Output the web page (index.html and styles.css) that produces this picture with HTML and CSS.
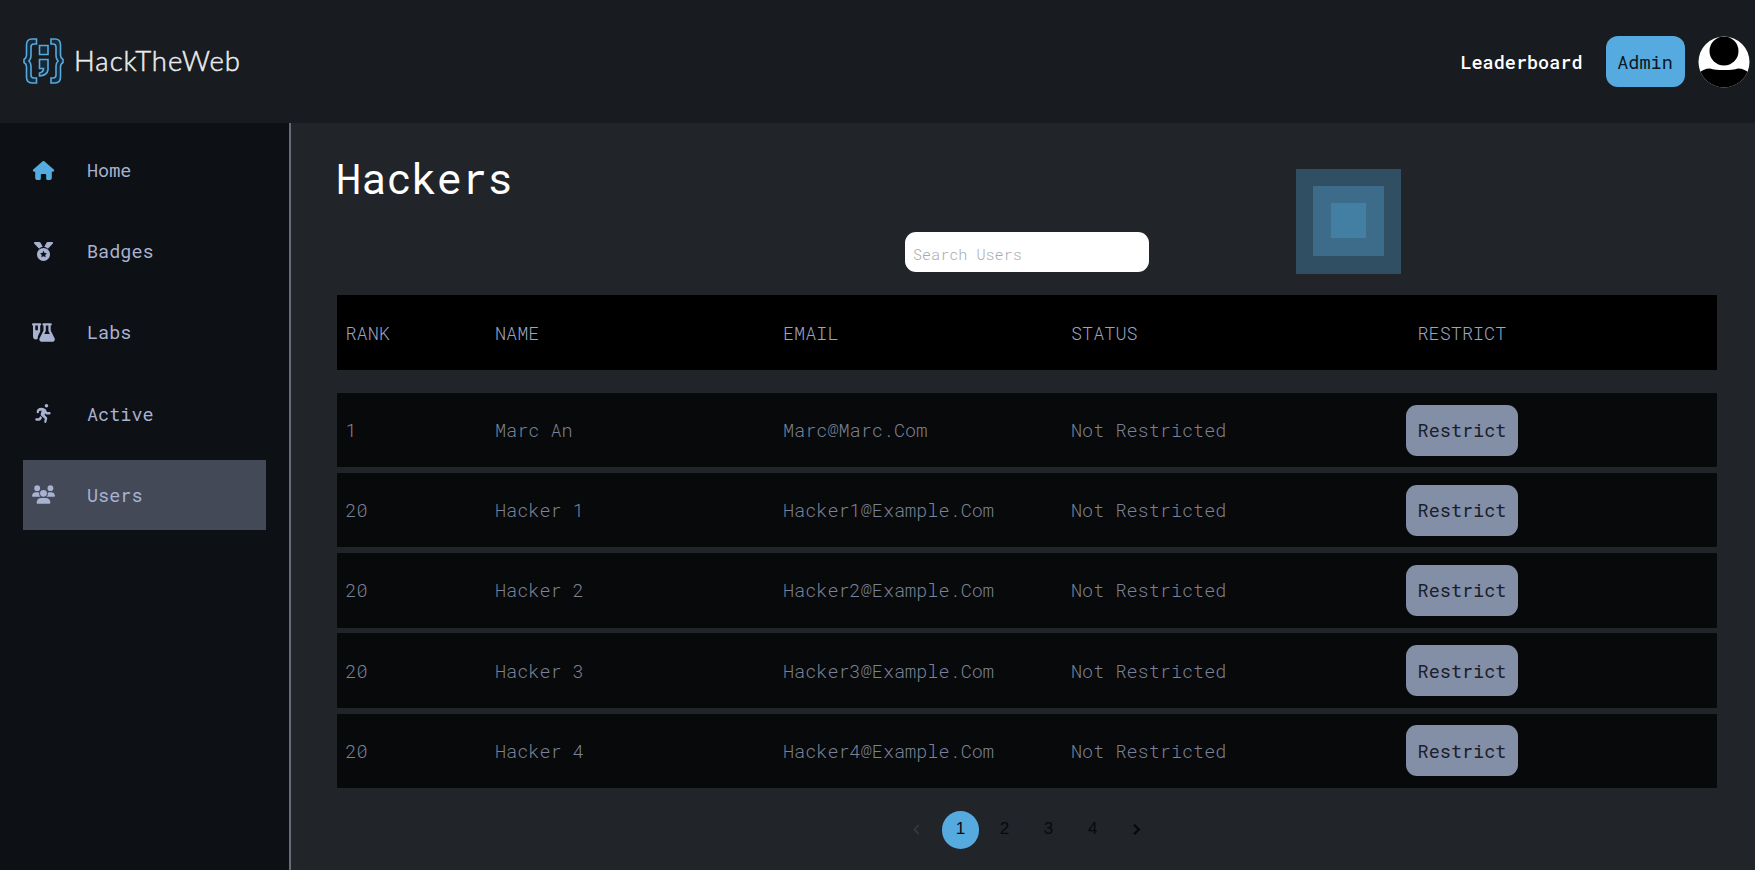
FILE: index.html
```html
<!DOCTYPE html>
<html lang="en">
<head>
<meta charset="utf-8">
<title>HackTheWeb</title>
<link rel="stylesheet" href="styles.css">
</head>
<body>
<header class="topbar">
  <div class="brand">
    <svg class="brand-mark" viewBox="0 0 41 46" width="41" height="46">
      <path d="M13.500 1H9Q3.500 1 3.500 7V17Q3.500 20 1 21.500V24.500Q3.500 26 3.500 29V39Q3.500 45 9 45H13.500V40H11Q8 40 8 37V28Q8 25 6 23Q8 21 8 18V9Q8 6 11 6H13.500Z"/>
      <path d="M28 1H32Q37.500 1 37.500 7V17Q37.500 20 40 21.500V24.500Q37.500 26 37.500 29V39Q37.500 45 32 45H28V40H30Q33 40 33 37V28Q33 25 35 23Q33 21 33 18V9Q33 6 30 6H28Z"/>
      <path d="M16.500 7.500H25V16.500H16.500ZM16.500 21.500H25V32Q24 37.500 16.500 38V35Q20.500 34 20.500 30.500H16.500Z"/>
    </svg>
    <svg class="brand-name" width="168" height="40" viewBox="0 0 168 40"><text x="0" y="30" textLength="166" lengthAdjust="spacing">HackTheWeb</text></svg>
  </div>
  <nav class="topnav">
    <a class="top-link">Leaderboard</a>
    <button class="admin">Admin</button>
    <svg class="avatar" viewBox="0 0 52 52" width="52" height="52">
      <clipPath id="round"><circle cx="26" cy="26" r="25.500"/></clipPath>
      <g clip-path="url(#round)"><rect width="52" height="52" fill="#fff"/><circle cx="26" cy="15" r="14.500"/><path d="M0 38Q5 32.500 12 32.500Q17 34 26 34Q35 34 40 32.500Q47 32.500 52 38V52H0Z"/></g>
    </svg>
  </nav>
</header>
<div class="body">
  <aside class="sidebar">
    <a class="item"><svg class="icon home" viewBox="0 0 576 512"><path d="M575.8 255.500c0 18-15 32.100-32 32.100h-32l.7 160.200c.2 35.500-28.500 64.300-64 64.300H392c-22 0-32-12-32-32V376c0-13-11-24-24-24h-96c-13 0-24 11-24 24v104c0 20-10 32-32 32h-56c-35.300 0-64-28.700-64-64V287.600H32c-18 0-32-14-32-32.100 0-9 3-17 10-24L266.400 8c7-7 15-8 22-8s15 2 21 7L564.800 231.500c8 7 12 15 11 24z"/></svg><span>Home</span></a>
    <a class="item"><svg class="icon" viewBox="0 0 512 512"><path fill-rule="evenodd" d="M4 38C-5 22 6 0 26 0h118c12 0 22 6 28 16l64 112c-38 6-73 24-99 51zM508 38 375 179c-27-27-61-45-99-51l64-112c6-10 16-16 28-16h118c20 0 31 22 22 38zM256 160a176 176 0 1 1 0 352 176 176 0 0 1 0-352zm0 76-29 58-64 9 46 45-11 64 58-30 58 30-11-64 46-45-64-9z"/></svg><span>Badges</span></a>
    <a class="item"><svg class="icon" viewBox="0 0 640 512"><path fill-rule="evenodd" d="M0 32Q0 0 24 0H232Q256 0 256 32Q256 60 228 64V230L174 340Q158 378 158 440Q40 480 28 368V64Q0 60 0 32ZM92 64V192H164V64ZM288 32Q288 0 320 0H520Q552 0 552 32Q552 60 520 64V200L632 425Q650 480 592 512H248Q190 480 208 425L320 200V64Q288 60 288 32ZM384 64V215L342 300H498L456 215V64Z"/></svg><span>Labs</span></a>
    <a class="item"><svg class="icon" viewBox="0 0 448 512"><circle cx="304" cy="48" r="48"/><path d="M40 220V196Q48 128 112 108Q190 92 248 120Q286 136 302 180L320 218H384Q416 222 416 250Q412 282 384 282H300Q278 276 268 250L254 298L310 350Q328 370 324 398L300 490Q290 514 266 511Q240 504 244 478L258 396L168 324Q142 300 150 266L174 184Q104 168 102 208V220Q94 250 68 248Q42 244 40 220ZM134 322L188 368Q158 440 106 448H32Q0 444 0 416Q2 386 32 384H94Q114 372 134 322Z"/></svg><span>Active</span></a>
    <a class="item active"><svg class="icon" viewBox="0 0 640 512"><circle cx="144" cy="80" r="80"/><circle cx="512" cy="80" r="80"/><circle cx="320" cy="224" r="96"/><path d="M0 299Q8 196 107 192H150Q178 192 201 203Q186 270 235 320H21Q2 318 0 299ZM640 299Q632 196 533 192H490Q462 192 439 203Q456 270 405 320H619Q638 318 640 299ZM128 485Q136 356 261 352H379Q504 356 512 485Q510 508 485 512H155Q130 508 128 485Z"/></svg><span>Users</span></a>
  </aside>
  <main class="content">
    <section class="intro">
      <h1>Hackers</h1>
      <input class="search" placeholder="Search Users">
      <div class="squares"><div class="sq-mid"><div class="sq-core"></div></div></div>
    </section>
    <div class="row head"><span>RANK</span><span>NAME</span><span>EMAIL</span><span>STATUS</span><span class="last">RESTRICT</span></div>
    <div class="rows">
      <div class="row"><span>1</span><span>Marc An</span><span>Marc@Marc.Com</span><span>Not Restricted</span><button class="restrict">Restrict</button></div>
      <div class="row"><span>20</span><span>Hacker 1</span><span>Hacker1@Example.Com</span><span>Not Restricted</span><button class="restrict">Restrict</button></div>
      <div class="row"><span>20</span><span>Hacker 2</span><span>Hacker2@Example.Com</span><span>Not Restricted</span><button class="restrict">Restrict</button></div>
      <div class="row"><span>20</span><span>Hacker 3</span><span>Hacker3@Example.Com</span><span>Not Restricted</span><button class="restrict">Restrict</button></div>
      <div class="row"><span>20</span><span>Hacker 4</span><span>Hacker4@Example.Com</span><span>Not Restricted</span><button class="restrict">Restrict</button></div>
    </div>
    <nav class="pages">
      <span class="page off"><svg viewBox="0 0 24 24" width="21" height="21"><path d="M15.410 7.410 14 6l-6 6 6 6 1.410-1.410L10.830 12z"/></svg></span>
      <span class="page current">1</span><span class="page">2</span><span class="page">3</span><span class="page">4</span>
      <span class="page next"><svg viewBox="0 0 24 24" width="21" height="21"><path d="M10 6 8.590 7.410 13.170 12l-4.580 4.590L10 18l6-6z"/></svg></span>
    </nav>
  </main>
</div>
</body>
</html>
```
FILE: styles.css
```css
* { box-sizing: border-box; }
body {
  margin: 0;
  height: 870px;
  overflow: hidden;
  display: flex;
  flex-direction: column;
  background: #212429;
  font-family: "Roboto Mono", "DejaVu Sans Mono", monospace;
  font-size: 18.500px;
}
button, input { font: inherit; border: 0; padding: 0; }
.topbar {
  flex: none;
  height: 123px;
  padding: 0 5px 0 23px;
  display: flex;
  justify-content: space-between;
  align-items: center;
  background: #181b20;
}
.brand { display: flex; align-items: center; gap: 10px; padding-bottom: 1px; }
.brand-mark { fill: #142b3c; stroke: #58a9dc; stroke-width: 1.6; }
.brand-name { overflow: visible; fill: #ececec; stroke: #ececec; stroke-width: 0.5; font: 300 27.500px Lato, sans-serif; }
.topnav { display: flex; align-items: center; }
.top-link { color: #fff; font-weight: 500; margin-right: 23px; }
.admin {
  width: 79px;
  height: 51px;
  margin-right: 13.500px;
  border-radius: 12px;
  background: #55aae0;
  color: #0c1722;
}
.body { flex: 1; display: flex; min-height: 0; }
.sidebar {
  width: 291px;
  flex: none;
  padding: 12px 23px 0;
  border-right: 2px solid #666b76;
  background: #0d1014;
  display: flex;
  flex-direction: column;
  gap: 11.200px;
}
.item {
  height: 70px;
  flex: none;
  display: flex;
  align-items: center;
  padding-left: 9px;
  gap: 32px;
  color: #a8b2d1;
}
.item.active { background: #434956; }
.icon { width: 23px; height: 19px; fill: #a8b2d1; }
.icon.home { fill: #55aae0; }
.content { flex: 1; padding: 0 38px 0 46px; }
.intro {
  height: 172px;
  display: grid;
  grid-template-columns: 568px 391px 105px;
  align-items: start;
}
h1 { margin: 30px 0 0 -1px; font-size: 42px; line-height: 50px; font-weight: 400; color: #fff; }
.search {
  width: 244px;
  height: 40px;
  margin-top: 109px;
  padding: 4px 8px 0;
  border-radius: 11px;
  background: #fff;
  font-size: 15.100px;
  font-weight: 300;
}
.search::placeholder { color: #a8aab1; opacity: 1; }
.squares { margin-top: 46px; height: 105px; padding: 17px; background: #304f62; }
.sq-mid { height: 70px; padding: 17px 18px; background: #3d6c8b; }
.sq-core { height: 35px; background: #437fa3; }
.row {
  height: 74.500px;
  padding-left: 8.500px;
  display: grid;
  grid-template-columns: 149.500px 288px 288px 335px 112px;
  align-items: center;
  background: #07090b;
  color: #7b8196;
  font-weight: 300;
}
.row.head { background: #000; color: #9ba4c0; padding-top: 1px; }
.last { padding-left: 11.500px; }
.rows { margin-top: 23.300px; display: flex; flex-direction: column; gap: 5.700px; }
.restrict { height: 51px; border-radius: 11px; background: #838ea7; color: #1a202c; font-weight: 400; }
.pages {
  margin-top: 23px;
  padding-left: 560.500px;
  display: flex;
  gap: 6.500px;
  font-family: "Liberation Sans", sans-serif;
  font-size: 17px;
}
.page { width: 37.600px; height: 37.600px; display: flex; align-items: center; justify-content: center; padding-bottom: 1px; color: #090a0c; fill: #090a0c; }
.page.current { background: #55aae0; border-radius: 50%; }
.page.off { fill: #35383d; }
.page.next { stroke: #090a0c; stroke-width: 1; }
```
